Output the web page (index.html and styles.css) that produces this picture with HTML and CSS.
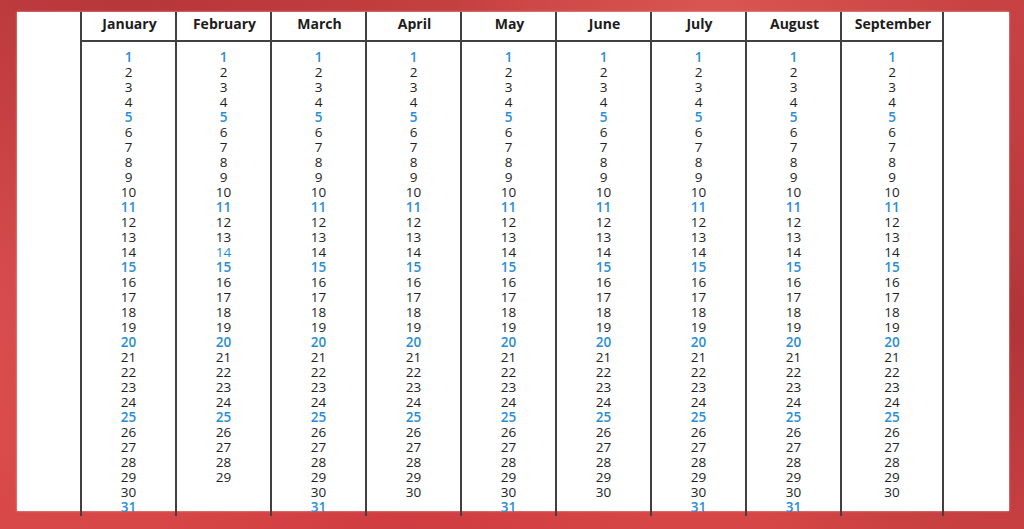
FILE: index.html
```html
<!DOCTYPE html>
<html lang="en">
<head>
<meta charset="utf-8">
<title>Calendar days</title>
<link rel="stylesheet" href="styles.css">
</head>
<body>
<div class="frame">
  <div class="panel">
    <div class="calendar">
      <div class="col"><div class="head">January</div><div class="days"><b>1</b><span>2</span><span>3</span><span>4</span><b>5</b><span>6</span><span>7</span><span>8</span><span>9</span><span>10</span><b>11</b><span>12</span><span>13</span><span>14</span><b>15</b><span>16</span><span>17</span><span>18</span><span>19</span><b>20</b><span>21</span><span>22</span><span>23</span><span>24</span><b>25</b><span>26</span><span>27</span><span>28</span><span>29</span><span>30</span><b>31</b></div></div>
      <div class="col"><div class="head">February</div><div class="days"><b>1</b><span>2</span><span>3</span><span>4</span><b>5</b><span>6</span><span>7</span><span>8</span><span>9</span><span>10</span><b>11</b><span>12</span><span>13</span><span class="soft">14</span><b>15</b><span>16</span><span>17</span><span>18</span><span>19</span><b>20</b><span>21</span><span>22</span><span>23</span><span>24</span><b>25</b><span>26</span><span>27</span><span>28</span><span>29</span></div></div>
      <div class="col"><div class="head">March</div><div class="days"><b>1</b><span>2</span><span>3</span><span>4</span><b>5</b><span>6</span><span>7</span><span>8</span><span>9</span><span>10</span><b>11</b><span>12</span><span>13</span><span>14</span><b>15</b><span>16</span><span>17</span><span>18</span><span>19</span><b>20</b><span>21</span><span>22</span><span>23</span><span>24</span><b>25</b><span>26</span><span>27</span><span>28</span><span>29</span><span>30</span><b>31</b></div></div>
      <div class="col"><div class="head">April</div><div class="days"><b>1</b><span>2</span><span>3</span><span>4</span><b>5</b><span>6</span><span>7</span><span>8</span><span>9</span><span>10</span><b>11</b><span>12</span><span>13</span><span>14</span><b>15</b><span>16</span><span>17</span><span>18</span><span>19</span><b>20</b><span>21</span><span>22</span><span>23</span><span>24</span><b>25</b><span>26</span><span>27</span><span>28</span><span>29</span><span>30</span></div></div>
      <div class="col"><div class="head">May</div><div class="days"><b>1</b><span>2</span><span>3</span><span>4</span><b>5</b><span>6</span><span>7</span><span>8</span><span>9</span><span>10</span><b>11</b><span>12</span><span>13</span><span>14</span><b>15</b><span>16</span><span>17</span><span>18</span><span>19</span><b>20</b><span>21</span><span>22</span><span>23</span><span>24</span><b>25</b><span>26</span><span>27</span><span>28</span><span>29</span><span>30</span><b>31</b></div></div>
      <div class="col"><div class="head">June</div><div class="days"><b>1</b><span>2</span><span>3</span><span>4</span><b>5</b><span>6</span><span>7</span><span>8</span><span>9</span><span>10</span><b>11</b><span>12</span><span>13</span><span>14</span><b>15</b><span>16</span><span>17</span><span>18</span><span>19</span><b>20</b><span>21</span><span>22</span><span>23</span><span>24</span><b>25</b><span>26</span><span>27</span><span>28</span><span>29</span><span>30</span></div></div>
      <div class="col"><div class="head">July</div><div class="days"><b>1</b><span>2</span><span>3</span><span>4</span><b>5</b><span>6</span><span>7</span><span>8</span><span>9</span><span>10</span><b>11</b><span>12</span><span>13</span><span>14</span><b>15</b><span>16</span><span>17</span><span>18</span><span>19</span><b>20</b><span>21</span><span>22</span><span>23</span><span>24</span><b>25</b><span>26</span><span>27</span><span>28</span><span>29</span><span>30</span><b>31</b></div></div>
      <div class="col"><div class="head">August</div><div class="days"><b>1</b><span>2</span><span>3</span><span>4</span><b>5</b><span>6</span><span>7</span><span>8</span><span>9</span><span>10</span><b>11</b><span>12</span><span>13</span><span>14</span><b>15</b><span>16</span><span>17</span><span>18</span><span>19</span><b>20</b><span>21</span><span>22</span><span>23</span><span>24</span><b>25</b><span>26</span><span>27</span><span>28</span><span>29</span><span>30</span><b>31</b></div></div>
      <div class="col"><div class="head">September</div><div class="days"><b>1</b><span>2</span><span>3</span><span>4</span><b>5</b><span>6</span><span>7</span><span>8</span><span>9</span><span>10</span><b>11</b><span>12</span><span>13</span><span>14</span><b>15</b><span>16</span><span>17</span><span>18</span><span>19</span><b>20</b><span>21</span><span>22</span><span>23</span><span>24</span><b>25</b><span>26</span><span>27</span><span>28</span><span>29</span><span>30</span></div></div>
    </div>
  </div>
</div>
</body>
</html>
```
FILE: styles.css
```css
html, body {
  margin: 0;
  padding: 0;
}
body {
  width: 1024px;
  height: 529px;
  overflow: hidden;
  font-family: "Open Sans", "Liberation Sans", sans-serif;
  color: #222;
  background-color: #d44848;
  background-image:
    radial-gradient(circle at 12% 8%, rgba(150, 30, 40, 0.35), transparent 40%),
    radial-gradient(circle at 70% 3%, rgba(240, 110, 100, 0.45), transparent 30%),
    radial-gradient(circle at 98% 60%, rgba(120, 25, 35, 0.45), transparent 30%),
    radial-gradient(circle at 3% 50%, rgba(230, 90, 90, 0.4), transparent 30%),
    radial-gradient(circle at 40% 100%, rgba(200, 50, 60, 0.5), transparent 30%),
    linear-gradient(180deg, #c74242 0%, #da4c4c 50%, #d64646 100%);
}
.frame {
  padding: 14px 15px 16px 17px;
  height: 499px;
}
.panel {
  background: #fff;
  height: 499px;
  padding-left: 63px;
  box-shadow: 0 0 2px rgba(255, 255, 255, 0.6);
}
.calendar {
  display: grid;
  grid-template-columns: repeat(8, 95px) 102px;
  width: 862px;
  height: 504px;
  margin-top: -2px;
  border-right: 2px solid #404040;
}
.col {
  border-left: 2px solid #404040;
  display: flex;
  flex-direction: column;
}
.head {
  height: 30px;
  line-height: 20px;
  padding-top: 2px;
  box-sizing: border-box;
  text-align: center;
  font-weight: 700;
  font-size: 14px;
  color: #1c1c1c;
  border-bottom: 2px solid #404040;
  margin-left: -2px;
  margin-right: -2px;
  padding-left: 2px;
}
.days {
  display: flex;
  flex-direction: column;
  align-items: center;
  padding-top: 8px;
  font-size: 13.5px;
  line-height: 15px;
}
.days span {
  display: block;
  color: #1e1e1e;
}
.days b {
  display: block;
  color: #2a8dd4;
  font-weight: 600;
}
.days .soft {
  color: #2a8dd4;
}
```
